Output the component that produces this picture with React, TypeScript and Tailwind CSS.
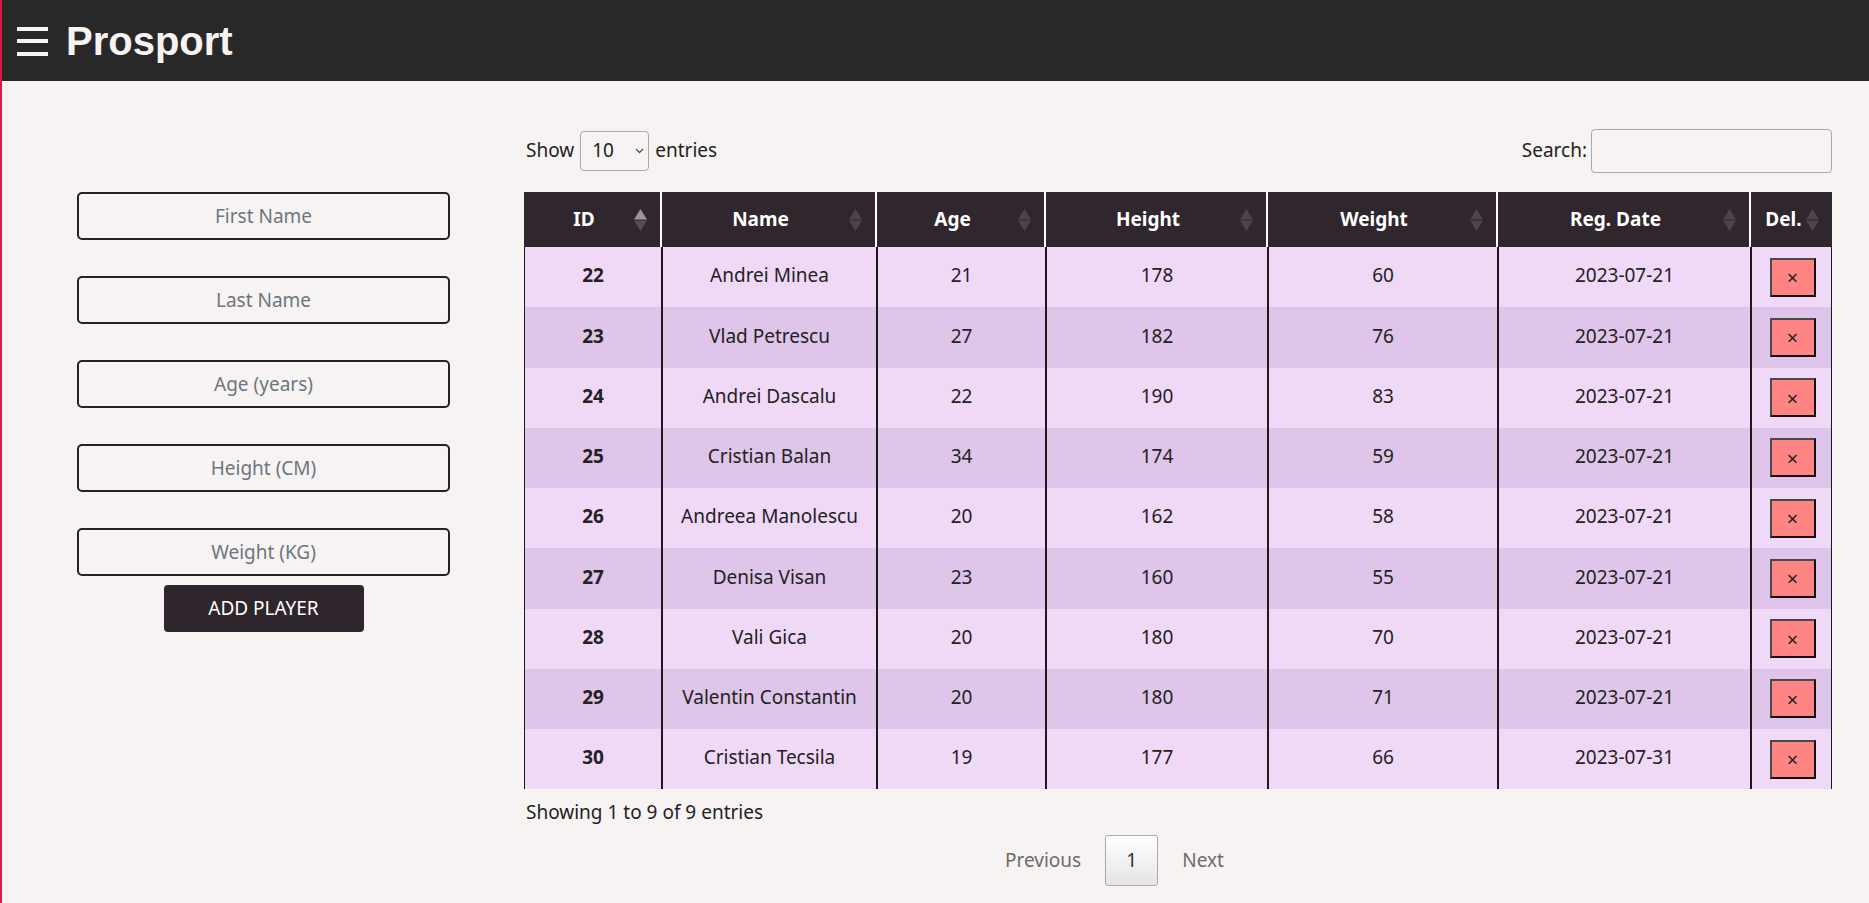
import React from 'react';

type Player = {
  id: number;
  name: string;
  age: number;
  height: number;
  weight: number;
  regDate: string;
};

const players: Player[] = [
  { id: 22, name: 'Andrei Minea', age: 21, height: 178, weight: 60, regDate: '2023-07-21' },
  { id: 23, name: 'Vlad Petrescu', age: 27, height: 182, weight: 76, regDate: '2023-07-21' },
  { id: 24, name: 'Andrei Dascalu', age: 22, height: 190, weight: 83, regDate: '2023-07-21' },
  { id: 25, name: 'Cristian Balan', age: 34, height: 174, weight: 59, regDate: '2023-07-21' },
  { id: 26, name: 'Andreea Manolescu', age: 20, height: 162, weight: 58, regDate: '2023-07-21' },
  { id: 27, name: 'Denisa Visan', age: 23, height: 160, weight: 55, regDate: '2023-07-21' },
  { id: 28, name: 'Vali Gica', age: 20, height: 180, weight: 70, regDate: '2023-07-21' },
  { id: 29, name: 'Valentin Constantin', age: 20, height: 180, weight: 71, regDate: '2023-07-21' },
  { id: 30, name: 'Cristian Tecsila', age: 19, height: 177, weight: 66, regDate: '2023-07-31' },
];

const columns = ['ID', 'Name', 'Age', 'Height', 'Weight', 'Reg. Date', 'Del.'];

const gridCols = 'grid grid-cols-[136px_215px_169px_222px_230px_253px_83px]';

const SortIcon: React.FC<{ active?: boolean }> = ({ active }) => (
  <svg width="13" height="22" viewBox="0 0 13 22" className="shrink-0">
    <polygon points="6.5,0 13,10.5 0,10.5" fill={active ? '#9a9599' : '#4d444b'} />
    <polygon points="0,11.5 13,11.5 6.5,22" fill={active ? '#564c54' : '#4d444b'} />
  </svg>
);

const fields = ['First Name', 'Last Name', 'Age (years)', 'Height (CM)', 'Weight (KG)'];

const cell = 'flex items-center justify-center pb-[3px]';

export default function App() {
  return (
    <div
      className="min-h-[903px] bg-[#f7f3f2] border-l-2 border-[#d81b48] text-[#222] flex flex-col"
      style={{ fontFamily: '"Noto Sans", sans-serif' }}
    >
      {/* top bar */}
      <header className="h-[81px] bg-[#282828] flex items-center pl-[15px] gap-[18px]">
        <div className="flex flex-col gap-[8.5px] w-[31px] mt-[1px]">
          <span className="block h-[4px] bg-[#f7f3f2]" />
          <span className="block h-[4px] bg-[#f7f3f2]" />
          <span className="block h-[4px] bg-[#f7f3f2]" />
        </div>
        <h1
          className="text-[40px] font-bold text-[#f7f3f2] leading-none"
          style={{ fontFamily: '"Liberation Sans", Arial, sans-serif' }}
        >
          Prosport
        </h1>
      </header>

      <div className="flex">
        {/* add player form */}
        <div className="w-[522px] pl-[75px] pt-[111px]">
          <div className="w-[373px] flex flex-col items-center">
            <div className="flex flex-col gap-[36px] w-full">
              {fields.map((f) => (
                <input
                  key={f}
                  placeholder={f}
                  className="w-full h-[48px] border-2 border-[#232226] rounded-[5px] bg-transparent text-center text-[19px] placeholder:text-[#6c7680] outline-none"
                />
              ))}
            </div>
            <button className="mt-[9px] w-[200px] h-[47px] bg-[#2f262d] text-white rounded-[4px] text-[19px]">
              ADD PLAYER
            </button>
          </div>
        </div>

        {/* players table */}
        <div className="w-[1308px] pt-[47px]">
          <div className="flex justify-between items-center h-[45px] text-[19px]">
            <div className="flex items-center gap-[6px] pl-[2px]">
              <span>Show</span>
              <div className="relative">
                <select className="appearance-none w-[69px] h-[40px] border border-[#aaa] rounded-[4px] bg-transparent pl-[11px] text-[19px] outline-none">
                  <option>10</option>
                  <option>25</option>
                  <option>50</option>
                  <option>100</option>
                </select>
                <svg
                  width="9"
                  height="6"
                  viewBox="0 0 9 6"
                  className="absolute right-[5px] top-[17px] pointer-events-none"
                >
                  <path d="M1 1 L4.5 4.5 L8 1" stroke="#555" strokeWidth="1.3" fill="none" />
                </svg>
              </div>
              <span>entries</span>
            </div>
            <label className="flex items-center gap-[4px]">
              <span>Search:</span>
              <input className="w-[241px] h-[44px] border border-[#aaa] rounded-[4px] bg-transparent outline-none px-2" />
            </label>
          </div>

          <div className="mt-[19px]">
            <div className={`${gridCols} h-[55px] bg-[#2f272d] text-white text-[19px] font-bold`}>
              {columns.map((c, i) => (
                <div
                  key={c}
                  className={`flex items-center pl-[10px] pr-[13px] ${i > 0 ? 'border-l-2 border-white' : ''}`}
                >
                  <span className="flex-1 text-center">{c}</span>
                  <SortIcon active={i === 0} />
                </div>
              ))}
            </div>
            {players.map((p, r) => (
              <div
                key={p.id}
                className={`${gridCols} h-[60.25px] text-[19px] border-l border-r border-[#1d1a1c] ${
                  r % 2 === 0 ? 'bg-[#f0d8f7]' : 'bg-[#dec5e9]'
                }`}
              >
                <div className={`${cell} font-bold`}>{p.id}</div>
                <div className={`${cell} border-l-2 border-[#1d1a1c]`}>{p.name}</div>
                <div className={`${cell} border-l-2 border-[#1d1a1c]`}>{p.age}</div>
                <div className={`${cell} border-l-2 border-[#1d1a1c]`}>{p.height}</div>
                <div className={`${cell} border-l-2 border-[#1d1a1c]`}>{p.weight}</div>
                <div className={`${cell} border-l-2 border-[#1d1a1c]`}>{p.regDate}</div>
                <div className="flex items-center justify-center border-l-2 border-[#1d1a1c]">
                  <button className="w-[46px] h-[39px] bg-[#ff8585] border-2 border-t-[#4a4a4a] border-l-[#4a4a4a] border-b-[#111] border-r-[#111] text-[20px] leading-none text-[#222] flex items-center justify-center pt-[2px]">
                    ×
                  </button>
                </div>
              </div>
            ))}
          </div>

          <div className="mt-[9px] pl-[2px] text-[19px]">Showing 1 to 9 of 9 entries</div>

          <div className="mt-[8px] pl-[481px] flex items-center gap-[24px] text-[19px]">
            <span className="text-[#6b6b6b]">Previous</span>
            <span className="w-[53px] h-[51px] flex items-center justify-center border border-[#aaa] rounded-[3px] bg-gradient-to-b from-white to-[#e6e4e3] text-[#333]">
              1
            </span>
            <span className="text-[#6b6b6b]">Next</span>
          </div>
        </div>
      </div>
    </div>
  );
}
